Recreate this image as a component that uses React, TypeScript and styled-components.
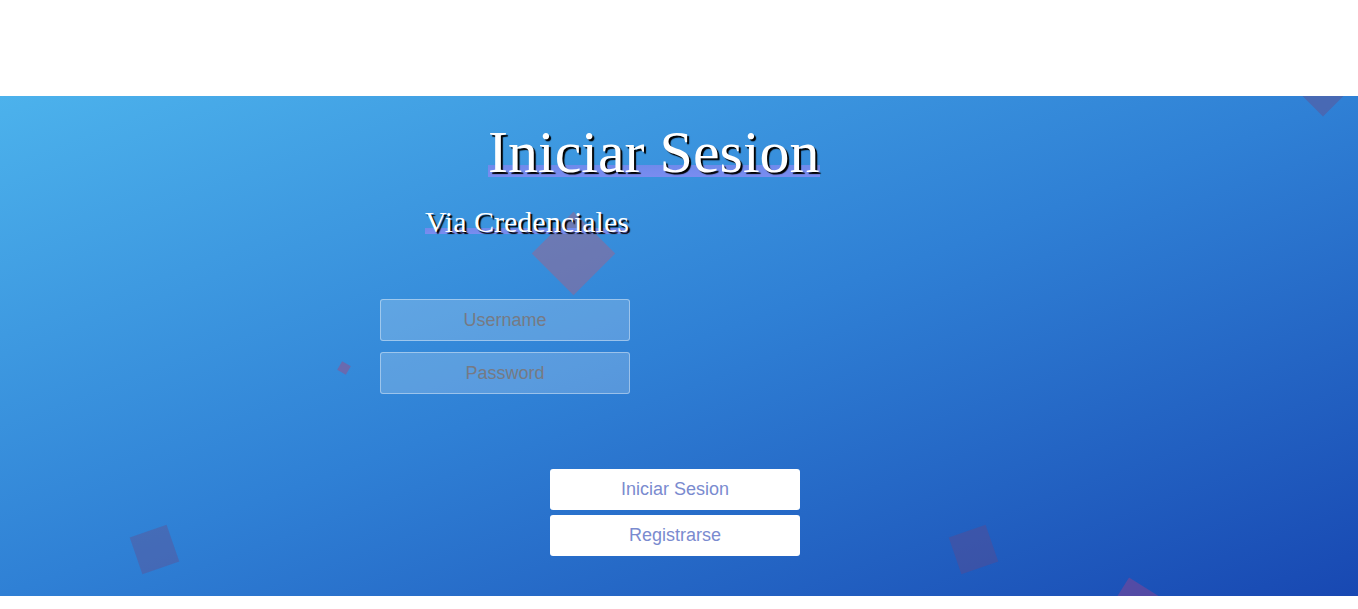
import React from 'react';
import styled, { createGlobalStyle } from 'styled-components';

const GlobalStyle = createGlobalStyle`
    html, body {
        margin: 0;
        padding: 0;
        background: #ffffff;
        font-family: 'Liberation Sans', Arial, sans-serif;
    }
`;

interface Square {
    x: number;
    y: number;
    size: number;
    angle: number;
    color: string;
}

// static copies of the floating squares behind the form
const squares: Square[] = [
    { x: 573, y: 157, size: 59, angle: 45, color: 'rgba(160, 100, 140, 0.5)' },
    { x: 1323, y: -12, size: 46, angle: 45, color: 'rgba(110, 70, 130, 0.4)' },
    { x: 154, y: 453, size: 39, angle: -19, color: 'rgba(110, 70, 130, 0.35)' },
    { x: 973, y: 453, size: 39, angle: -19, color: 'rgba(110, 70, 130, 0.35)' },
    { x: 1137, y: 516, size: 50, angle: 32, color: 'rgba(130, 70, 150, 0.55)' },
    { x: 344, y: 272, size: 10, angle: 30, color: 'rgba(150, 80, 140, 0.55)' },
];

export default function App() {
    return <>
        <GlobalStyle />
        <TopBar />
        <Hero>
            {squares.map((s, i) => (
                <Bubble
                    key={i}
                    style={{
                        left: s.x - s.size / 2,
                        top: s.y - s.size / 2,
                        width: s.size,
                        height: s.size,
                        transform: `rotate(${s.angle}deg)`,
                        background: s.color,
                    }}
                />
            ))}
            <Form>
                <Title><Highlight>Iniciar Sesion</Highlight></Title>
                <Subtitle><Highlight>Via Credenciales</Highlight></Subtitle>
                <Fields>
                    <Field type="text" placeholder="Username" />
                    <Field type="password" placeholder="Password" />
                </Fields>
                <Buttons>
                    <Button type="button">Iniciar Sesion</Button>
                    <Button type="button">Registrarse</Button>
                </Buttons>
            </Form>
        </Hero>
    </>;
}

const TopBar = styled.header`
    height: 96px;
    background: #ffffff;
`;

const Hero = styled.section`
    position: relative;
    height: 500px;
    overflow: hidden;
    background: linear-gradient(to bottom right, #4cb2ec 0%, #2f80d5 50%, #1848b2 100%);
`;

const Bubble = styled.div`
    position: absolute;
    z-index: 0;
`;

const Form = styled.div`
    position: relative;
    z-index: 1;
    width: 440px;
    margin-left: 380px;
    padding-top: 23px;
    display: flex;
    flex-direction: column;
    align-items: flex-start;
`;

const Highlight = styled.span`
    background: linear-gradient(
        to bottom,
        transparent 70%,
        #6f8aeb 70%,
        #7a8cf0 88%,
        transparent 88%
    );
`;

const Title = styled.h1`
    margin: 0 0 0 108px;
    font-family: 'Liberation Serif', 'Times New Roman', serif;
    font-size: 60px;
    font-weight: 400;
    line-height: 66px;
    color: #ffffff;
    text-shadow: 2px 2px 1px #000000;
    white-space: nowrap;
`;

const Subtitle = styled.h2`
    margin: 20px 0 0 45px;
    font-family: 'Liberation Serif', 'Times New Roman', serif;
    font-size: 30px;
    font-weight: 400;
    line-height: 33px;
    color: #ffffff;
    text-shadow: 2px 2px 1px #000000;
    white-space: nowrap;
`;

const Fields = styled.div`
    margin-top: 61px;
    display: flex;
    flex-direction: column;
    gap: 11px;
`;

const Field = styled.input`
    box-sizing: border-box;
    width: 250px;
    height: 42px;
    padding: 0 15px;
    border: 1px solid rgba(255, 255, 255, 0.4);
    border-radius: 3px;
    background: rgba(255, 255, 255, 0.2);
    font-family: 'Liberation Sans', Arial, sans-serif;
    font-size: 18px;
    text-align: center;
    color: #ffffff;
    outline: none;

    &::placeholder {
        color: #767a84;
        opacity: 1;
    }
`;

const Buttons = styled.div`
    margin: 75px 0 0 170px;
    display: flex;
    flex-direction: column;
    gap: 5px;
`;

const Button = styled.button`
    box-sizing: border-box;
    width: 250px;
    height: 41px;
    padding: 0;
    border: 0;
    border-radius: 3px;
    background: #ffffff;
    font-family: 'Liberation Sans', Arial, sans-serif;
    font-size: 18px;
    color: #7a8bcf;
    cursor: pointer;
`;
